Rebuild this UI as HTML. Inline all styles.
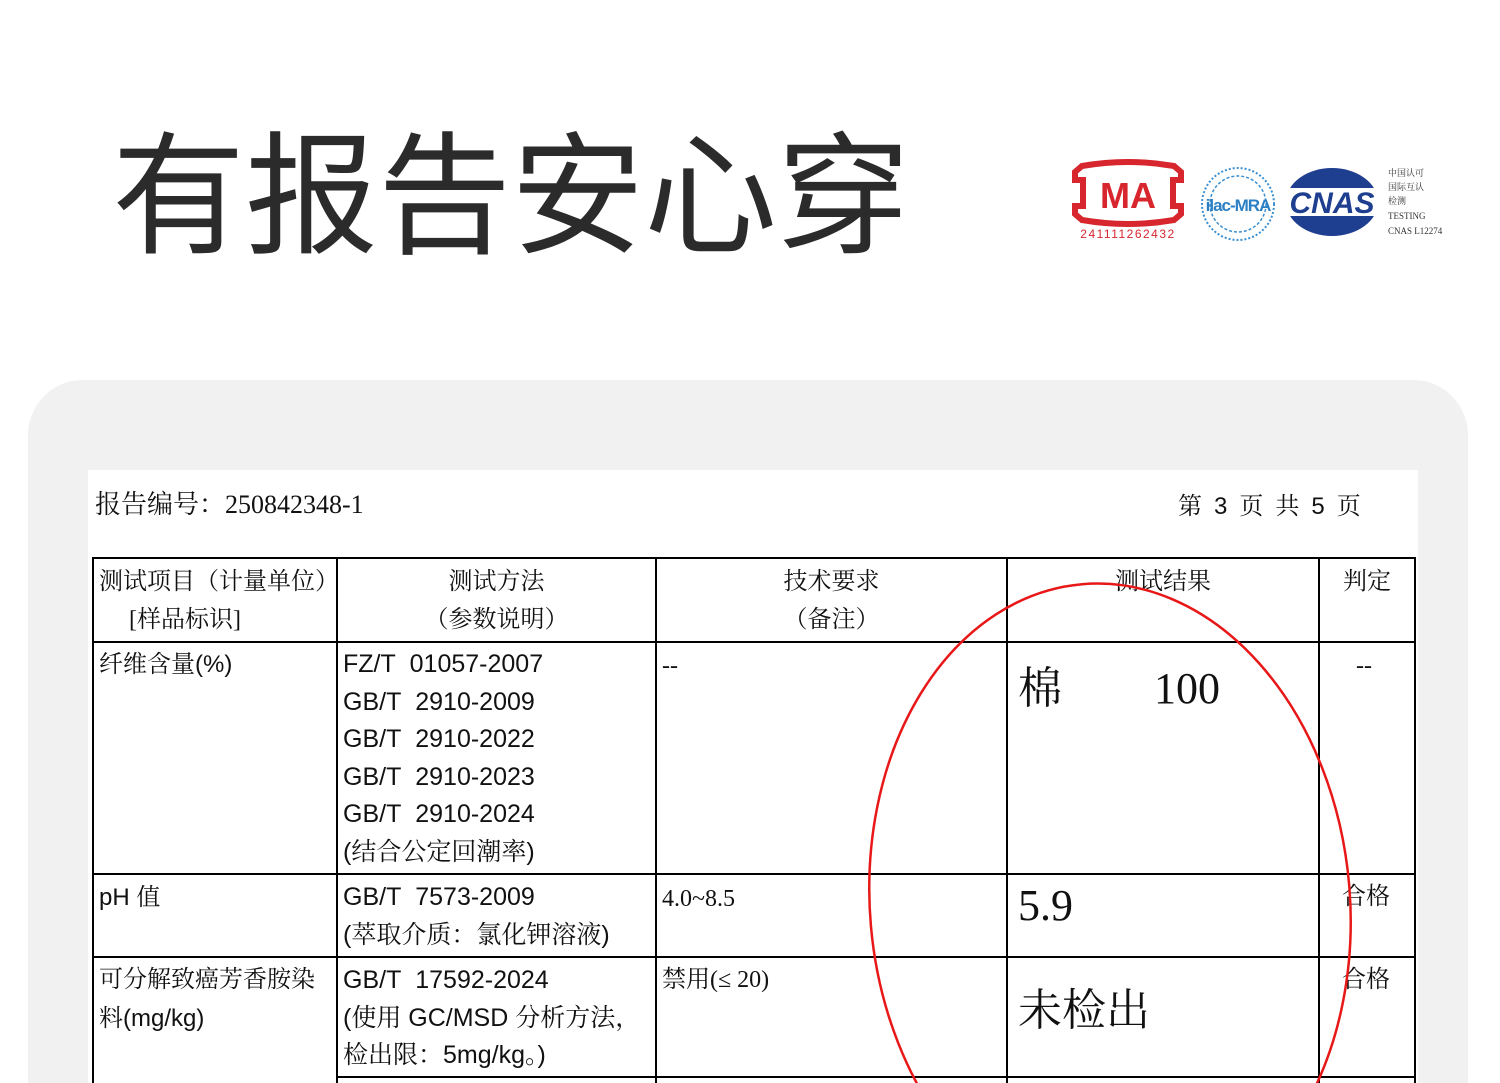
<!DOCTYPE html>
<html><head><meta charset="utf-8"><style>
html,body{margin:0;width:1500px;height:1083px;overflow:hidden;}
body{background:#fff;position:relative;font-family:"Liberation Serif","Noto Serif CJK SC",serif;}
.a{position:absolute;white-space:nowrap}
.title{left:112px;top:118px;font-family:"Liberation Sans","Noto Sans CJK SC",sans-serif;font-size:133px;color:#2b2b2b;line-height:160px}
.panel{left:28px;top:380px;width:1440px;height:703px;background:#f1f1f1;border-radius:55px 55px 0 0}
.paper{left:88px;top:470px;width:1330px;height:613px;background:#fff}
.t{font-size:24px;color:#111;line-height:37.5px}
.s{font-family:"Liberation Sans","Noto Serif CJK SC",sans-serif}
.h{position:absolute;background:#000}
</style></head><body>
<div class="a title">有报告安心穿</div>

<svg class="a" style="left:1060px;top:150px" width="400" height="100">
<path d="M22 16 Q68 8 114 16 L121 22 L121 30 L113 30 L113 56 L121 56 L121 64 L114 70 Q68 78 22 70 L15 64 L15 56 L23 56 L23 30 L15 30 L15 22 Z" fill="none" stroke="#d7262e" stroke-width="6"/>
<text x="68" y="58" text-anchor="middle" font-family="Liberation Sans" font-weight="bold" font-size="36" fill="#d7262e">MA</text>
<text x="68" y="88" text-anchor="middle" font-family="Liberation Sans" font-size="12" fill="#d7262e" letter-spacing="1.5">241111262432</text>
<circle cx="178" cy="54" r="36" fill="none" stroke="#3a8fd0" stroke-width="2" stroke-dasharray="2 2"/>
<circle cx="178" cy="54" r="28" fill="none" stroke="#3a8fd0" stroke-width="1.5" stroke-dasharray="3 2"/>
<text x="178" y="61" text-anchor="middle" font-family="Liberation Sans" font-weight="bold" font-size="17" fill="#2b7fc4" letter-spacing="-1">ilac-MRA</text>
<ellipse cx="272" cy="52" rx="46" ry="34" fill="#1e3f8f"/>
<rect x="222" y="38" width="100" height="28" fill="#fff"/>
<text x="272" y="63" text-anchor="middle" font-family="Liberation Sans" font-weight="bold" font-style="italic" font-size="30" fill="#1e3f8f">CNAS</text>
<g font-family="Liberation Serif,Noto Serif CJK SC,serif" font-size="9" fill="#333"><text x="328" y="26">中国认可</text><text x="328" y="40">国际互认</text><text x="328" y="54">检测</text><text x="328" y="69">TESTING</text><text x="328" y="84">CNAS L12274</text></g>
</svg>

<div class="a panel"></div>
<div class="a paper"></div>
<div class="a" style="left:95px;top:484px;font-size:26px;color:#111">报告编号：250842348-1</div>
<div class="a" style="left:1178px;top:486px;font-size:24px;color:#111;word-spacing:6px">第 <span class="s">3</span> 页 共 <span class="s">5</span> 页</div>

<div class="h" style="left:92px;top:557px;width:1324px;height:2px"></div>
<div class="h" style="left:92px;top:641px;width:1324px;height:2px"></div>
<div class="h" style="left:92px;top:873px;width:1324px;height:2px"></div>
<div class="h" style="left:92px;top:956px;width:1324px;height:2px"></div>
<div class="h" style="left:337px;top:1076px;width:1079px;height:2px"></div>
<div class="h" style="left:92px;top:557px;width:2px;height:526px"></div>
<div class="h" style="left:336px;top:557px;width:2px;height:526px"></div>
<div class="h" style="left:655px;top:557px;width:2px;height:526px"></div>
<div class="h" style="left:1006px;top:557px;width:2px;height:526px"></div>
<div class="h" style="left:1318px;top:557px;width:2px;height:526px"></div>
<div class="h" style="left:1414px;top:557px;width:2px;height:526px"></div>

<div class="a t" style="left:99px;top:564px">测试项目（计量单位）<br>&nbsp;&nbsp;&nbsp;&nbsp;&nbsp;[样品标识]</div>
<div class="a t" style="left:338px;width:317px;top:564px;text-align:center">测试方法<br>（参数说明）</div>
<div class="a t" style="left:657px;width:349px;top:564px;text-align:center">技术要求<br>（备注）</div>
<div class="a t" style="left:1008px;width:310px;top:564px;text-align:center">测试结果</div>
<div class="a t" style="left:1320px;width:94px;top:564px;text-align:center">判定</div>

<div class="a t" style="left:99px;top:646px">纤维含量<span class="s">(%)</span></div>
<div class="a t s" style="left:343px;top:646px;font-size:25px">FZ/T&nbsp; 01057-2007<br>GB/T&nbsp; 2910-2009<br>GB/T&nbsp; 2910-2022<br>GB/T&nbsp; 2910-2023<br>GB/T&nbsp; 2910-2024<br>(结合公定回潮率)</div>
<div class="a t" style="left:662px;top:648px">--</div>
<div class="a" style="left:1018px;top:652px;font-size:44px;color:#111">棉<span style="display:inline-block;width:92px"></span>100</div>
<div class="a t" style="left:1356px;top:648px">--</div>

<div class="a t s" style="left:99px;top:879px">pH 值</div>
<div class="a t s" style="left:343px;top:879px;font-size:25px">GB/T&nbsp; 7573-2009<br>(萃取介质：氯化钾溶液)</div>
<div class="a t" style="left:662px;top:881px">4.0~8.5</div>
<div class="a" style="left:1018px;top:880px;font-size:44px;color:#111">5.9</div>
<div class="a t" style="left:1342px;top:879px">合格</div>

<div class="a t" style="left:99px;top:962px">可分解致癌芳香胺染<br>料<span class="s">(mg/kg)</span></div>
<div class="a t s" style="left:343px;top:962px;font-size:25px">GB/T&nbsp; 17592-2024<br>(使用 GC/MSD 分析方法，<br>检出限：5mg/kg。)</div>
<div class="a t" style="left:662px;top:962px">禁用(≤ 20)</div>
<div class="a" style="left:1018px;top:974px;font-size:44px;color:#111">未检出</div>
<div class="a t" style="left:1342px;top:962px">合格</div>

<svg class="a" style="left:0;top:0" width="1500" height="1083">
<ellipse cx="1110" cy="905" rx="240" ry="322" transform="rotate(-5 1110 905)" fill="none" stroke="#e81818" stroke-width="2.5"/>
</svg>
</body></html>
